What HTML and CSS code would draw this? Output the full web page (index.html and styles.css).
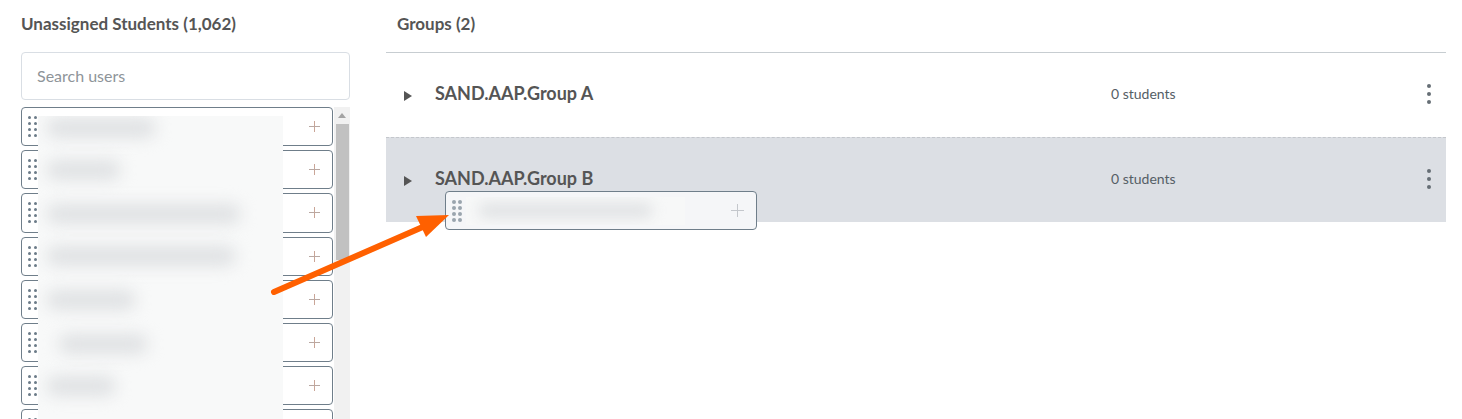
FILE: index.html
```html
<!DOCTYPE html>
<html lang="en">
<head>
  <meta charset="utf-8">
  <title>Groups</title>
  <link rel="stylesheet" href="styles.css">
</head>
<body>
  <div class="page">
    <!-- unassigned students -->
    <div class="left">
      <h2 class="heading">Unassigned Students (1,062)</h2>
      <div class="search">Search users</div>
      <div class="list">
        <div class="rows">
          <div class="student"><span class="grip"><i></i><i></i><i></i><i></i><i></i><i></i><i></i><i></i></span><span class="plus"></span></div>
          <div class="student"><span class="grip"><i></i><i></i><i></i><i></i><i></i><i></i><i></i><i></i></span><span class="plus"></span></div>
          <div class="student"><span class="grip"><i></i><i></i><i></i><i></i><i></i><i></i><i></i><i></i></span><span class="plus"></span></div>
          <div class="student"><span class="grip"><i></i><i></i><i></i><i></i><i></i><i></i><i></i><i></i></span><span class="plus"></span></div>
          <div class="student"><span class="grip"><i></i><i></i><i></i><i></i><i></i><i></i><i></i><i></i></span><span class="plus"></span></div>
          <div class="student"><span class="grip"><i></i><i></i><i></i><i></i><i></i><i></i><i></i><i></i></span><span class="plus"></span></div>
          <div class="student"><span class="grip"><i></i><i></i><i></i><i></i><i></i><i></i><i></i><i></i></span><span class="plus"></span></div>
          <div class="student"><span class="grip"><i></i><i></i><i></i><i></i><i></i><i></i><i></i><i></i></span><span class="plus"></span></div>
        </div>
        <div class="scrollbar">
          <span class="scroll-up"></span>
          <span class="scroll-thumb"></span>
        </div>
        <!-- names are blurred out in the screenshot -->
        <div class="redact">
          <span class="smudge s1"></span>
          <span class="smudge s2"></span>
          <span class="smudge s3"></span>
          <span class="smudge s4"></span>
          <span class="smudge s5"></span>
          <span class="smudge s6"></span>
          <span class="smudge s7"></span>
        </div>
      </div>
    </div>

    <!-- groups -->
    <div class="right">
      <h2 class="heading heading-groups">Groups (2)</h2>
      <div class="group">
        <span class="caret"></span>
        <span class="group-name">SAND.AAP.Group A</span>
        <span class="count">0 students</span>
        <span class="kebab"><i></i><i></i><i></i></span>
      </div>
      <div class="group group-over">
        <span class="caret"></span>
        <span class="group-name">SAND.AAP.Group B</span>
        <span class="count">0 students</span>
        <span class="kebab"><i></i><i></i><i></i></span>
        <div class="student dragging">
          <span class="grip"><i></i><i></i><i></i><i></i><i></i><i></i><i></i><i></i></span>
          <span class="plus"></span>
          <div class="redact-drag"><span class="smudge-drag"></span></div>
        </div>
      </div>
    </div>
  </div>

  <!-- annotation arrow -->
  <svg class="arrow" width="1462" height="419" viewBox="0 0 1462 419">
    <line x1="274" y1="292" x2="425" y2="226" stroke="#ff6000" stroke-width="6" stroke-linecap="round"/>
    <polygon points="449,215 416,216 426,237" fill="#ff6000"/>
  </svg>
</body>
</html>
```

FILE: styles.css
```css
* { margin: 0; padding: 0; box-sizing: border-box; }
body {
  font-family: "Lato", "Liberation Sans", sans-serif;
  color: #555;
  background: #fff;
  height: 419px;
  overflow: hidden;
}
.page {
  display: flex;
  gap: 36px;
  padding: 0 16px 0 21px;
  height: 419px;
}
.heading {
  font-size: 17px;
  font-weight: 700;
  line-height: 20px;
  padding-top: 14px;
  height: 52px;
  color: #555;
}

/* left column */
.left { width: 329px; flex: none; }
.search {
  height: 48px;
  border: 1px solid #d9dee4;
  border-radius: 4px;
  padding: 0 15px;
  line-height: 46px;
  font-size: 16px;
  color: #8e9499;
}
.list {
  position: relative;
  display: flex;
  margin-top: 7px;
  height: 312px;
  overflow: hidden;
}
.rows {
  width: 312px;
  flex: none;
  display: flex;
  flex-direction: column;
  gap: 4px;
}
.student {
  flex: none;
  height: 39.2px;
  border: 1px solid #6f7e8a;
  border-radius: 4px;
  background: #fff;
  display: flex;
  align-items: center;
  justify-content: space-between;
  padding: 0 12px 0 6px;
}
.grip {
  display: grid;
  grid-template-columns: 3px 3px;
  column-gap: 3px;
  row-gap: 3px;
}
.grip i {
  width: 3px;
  height: 3px;
  border-radius: 50%;
  background: #6b7b88;
}
.plus {
  position: relative;
  width: 11px;
  height: 11px;
  background:
    linear-gradient(#b9a8a2, #b9a8a2) center / 100% 1px no-repeat,
    linear-gradient(#c9a597, #c9a597) center / 1px 100% no-repeat;
}

/* scrollbar */
.scrollbar {
  width: 17px;
  margin-left: 1px;
  background: #f1f1f1;
  display: flex;
  flex-direction: column;
  align-items: center;
}
.scroll-up {
  margin: 6px 0 6px;
  border-left: 4px solid transparent;
  border-right: 4px solid transparent;
  border-bottom: 5px solid #a3a3a3;
}
.scroll-thumb {
  width: 13px;
  height: 136px;
  background: #c1c1c1;
}

/* blurred names */
.redact {
  position: absolute;
  left: 17px;
  top: 9px;
  width: 245px;
  height: 303px;
  background: #f8f9f9;
  overflow: hidden;
}
.smudge {
  position: absolute;
  height: 20px;
  background: #dfe1e3;
  border-radius: 10px;
  filter: blur(8px);
}
.s1 { left: 8px; top: 2px; width: 110px; }
.s2 { left: 8px; top: 44px; width: 75px; }
.s3 { left: 8px; top: 88px; width: 195px; }
.s4 { left: 8px; top: 130px; width: 190px; }
.s5 { left: 8px; top: 174px; width: 90px; }
.s6 { left: 20px; top: 218px; width: 90px; }
.s7 { left: 8px; top: 260px; width: 70px; }

/* right column */
.right { flex: 1; }
.heading-groups {
  padding-left: 11px;
  border-bottom: 1px solid #c7cdd1;
  height: 53px;
}
.group {
  position: relative;
  display: flex;
  align-items: center;
  height: 84px;
  padding: 0 15px 4px 18px;
}
.group-over {
  height: 85px;
  background: #dcdfe4;
  border-top: 1px dashed #c4c7cc;
}
.caret {
  margin-top: 6px;
  border-top: 5px solid transparent;
  border-bottom: 5px solid transparent;
  border-left: 8px solid #555;
}
.group-name {
  margin-left: 23px;
  width: 676px;
  flex: none;
  font-size: 18px;
  font-weight: 700;
  color: #555;
}
.count {
  flex: 1;
  font-size: 14px;
  color: #555e66;
}
.kebab {
  display: flex;
  flex-direction: column;
  gap: 4px;
  margin-top: 2px;
}
.kebab i {
  width: 4px;
  height: 4px;
  border-radius: 50%;
  background: #666e75;
}

/* card being dragged over group B */
.dragging {
  position: absolute;
  left: 59px;
  top: 53px;
  width: 312px;
  height: 39px;
  background: #f5f6f8;
  padding-right: 12px;
}
.dragging .grip i { background: #9aa5ae; width: 4px; height: 4px; }
.dragging .grip { grid-template-columns: 4px 4px; column-gap: 2px; row-gap: 2px; }
.dragging .plus {
  width: 13px;
  height: 13px;
  background:
    linear-gradient(#c4c7cc, #c4c7cc) center / 100% 1px no-repeat,
    linear-gradient(#c4c7cc, #c4c7cc) center / 1px 100% no-repeat;
}
.redact-drag {
  position: absolute;
  left: 20px;
  top: 5px;
  width: 219px;
  height: 28px;
  background: #f7f8f8;
  overflow: hidden;
}
.smudge-drag {
  position: absolute;
  left: 12px;
  top: 6px;
  width: 175px;
  height: 15px;
  background: #e0e2e4;
  border-radius: 8px;
  filter: blur(7px);
}

.arrow {
  position: absolute;
  left: 0;
  top: 0;
  pointer-events: none;
}
```
